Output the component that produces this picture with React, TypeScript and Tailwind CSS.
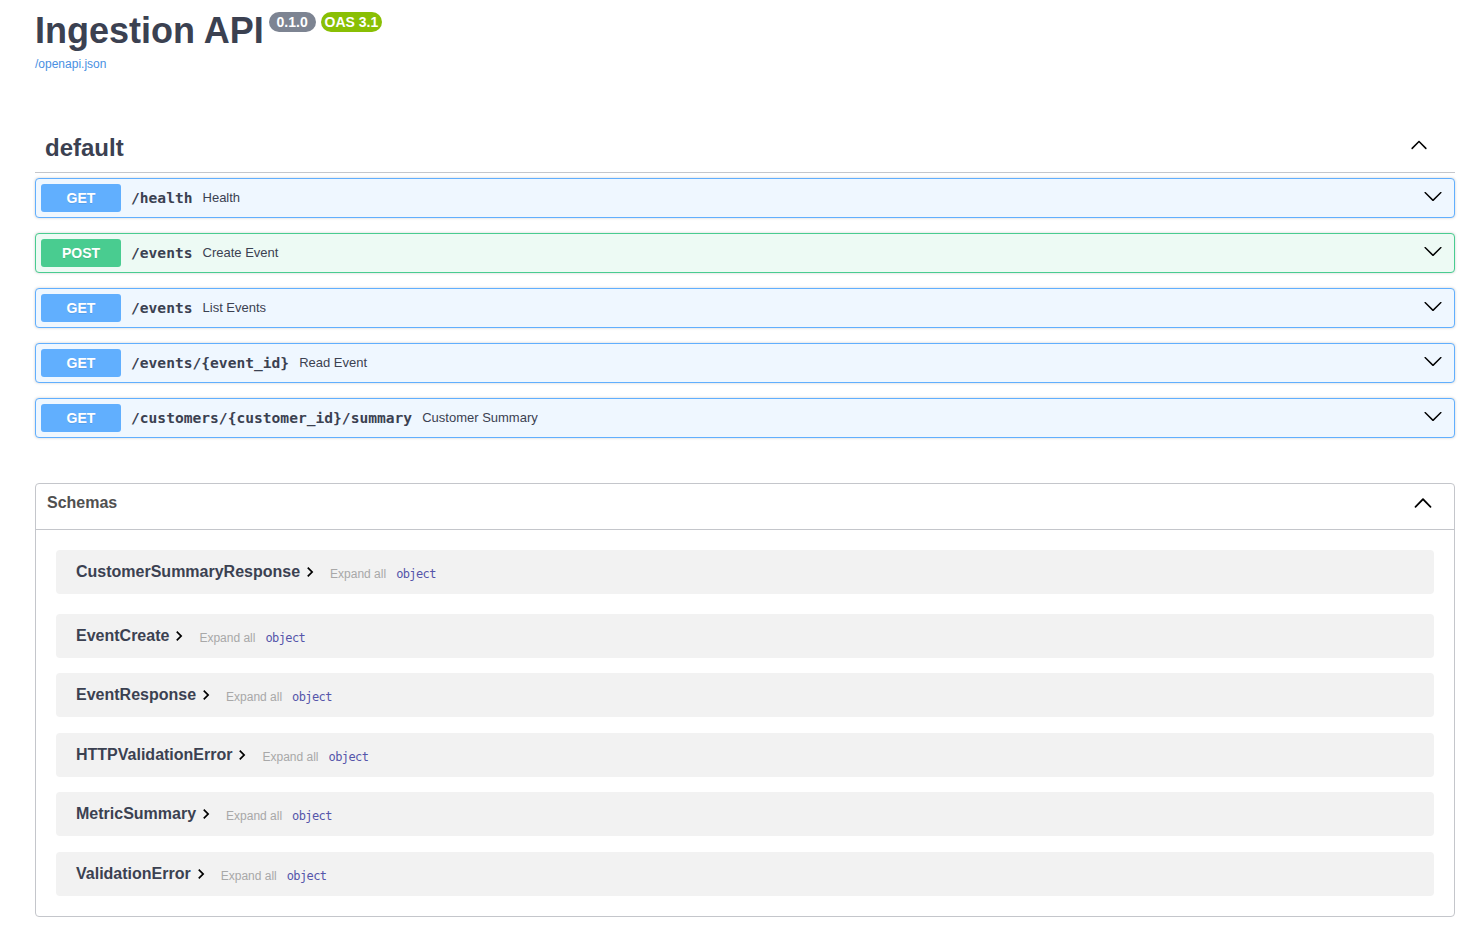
import React from "react";

const sans = { fontFamily: '"Liberation Sans", Arial, sans-serif' };

const ArrowUp = ({ className }: { className?: string }) => (
  <svg viewBox="0 0 20 20" className={className} fill="#000">
    <path d="M17.418 14.908c-.311.311-.815.311-1.127 0L10 8.617l-6.291 6.291c-.311.311-.815.311-1.127 0-.311-.311-.311-.815 0-1.127l6.854-6.854c.311-.311.815-.311 1.127 0l6.854 6.854c.312.311.312.815.001 1.127z" />
  </svg>
);

const ArrowDown = ({ className }: { className?: string }) => (
  <svg viewBox="0 0 20 20" className={className} fill="#000">
    <path d="M17.418 6.109c.272-.268.709-.268.979 0s.271.701 0 .969l-7.908 7.83c-.27.268-.707.268-.979 0l-7.908-7.83c-.27-.268-.27-.701 0-.969.271-.268.709-.268.979 0L10 13.25l7.418-7.141z" />
  </svg>
);

const ChevronRight = () => (
  <svg viewBox="0 0 24 24" className="w-[20px] h-[20px] shrink-0" fill="#000">
    <path d="M10 6L8.59 7.41 13.17 12l-4.58 4.59L10 18l6-6z" />
  </svg>
);

type Op = { method: "GET" | "POST"; path: string; desc: string };

const ops: Op[] = [
  { method: "GET", path: "/health", desc: "Health" },
  { method: "POST", path: "/events", desc: "Create Event" },
  { method: "GET", path: "/events", desc: "List Events" },
  { method: "GET", path: "/events/{event_id}", desc: "Read Event" },
  { method: "GET", path: "/customers/{customer_id}/summary", desc: "Customer Summary" },
];

const models = [
  { name: "CustomerSummaryResponse", mb: "mb-[20px]" },
  { name: "EventCreate", mb: "mb-[15px]" },
  { name: "EventResponse", mb: "mb-[16px]" },
  { name: "HTTPValidationError", mb: "mb-[15px]" },
  { name: "MetricSummary", mb: "mb-[16px]" },
  { name: "ValidationError", mb: "mb-0" },
];

function OpBlock({ op }: { op: Op }) {
  const isGet = op.method === "GET";
  return (
    <div
      className={`flex items-center h-[40px] rounded-[4px] border p-[5px] shadow-[0_0_3px_rgba(0,0,0,0.19)] ${
        isGet ? "border-[#61affe] bg-[#eff7ff]" : "border-[#49cc90] bg-[#edfaf4]"
      }`}
    >
      <div
        className={`w-[80px] h-[28px] shrink-0 flex items-center justify-center rounded-[3px] text-white font-bold text-[14px] leading-[16px] [text-shadow:0_1px_0_rgba(0,0,0,0.1)] ${
          isGet ? "bg-[#61affe]" : "bg-[#49cc90]"
        }`}
        style={sans}
      >
        {op.method}
      </div>
      <span
        className="px-[10px] font-bold text-[14.6px] text-[#3b4151] whitespace-nowrap"
        style={{ fontFamily: '"DejaVu Sans Mono", "Liberation Mono", monospace' }}
      >
        {op.path}
      </span>
      <span className="flex-1 text-[13px] text-[#3b4151]" style={sans}>
        {op.desc}
      </span>
      <ArrowDown className="w-[20px] h-[20px] mr-[6px] mb-[4px] shrink-0" />
    </div>
  );
}

export default function App() {
  return (
    <div className="min-h-[938px] bg-white pl-[35px] pr-[25px] pt-[10px]" style={sans}>
      {/* Info */}
      <div className="flex items-start">
        <h2 className="text-[36px] leading-[41px] font-bold text-[#3b4151]" style={sans}>
          Ingestion API
        </h2>
        <span className="ml-[5px] mt-[2px] h-[20px] flex items-center rounded-full bg-[#7d8492] px-[4px] text-white text-[14px] font-bold leading-[16px] whitespace-pre">
          {" 0.1.0 "}
        </span>
        <span className="ml-[5px] mt-[2px] h-[20px] flex items-center rounded-full bg-[#89bf04] px-[4px] text-white text-[14px] font-bold leading-[16px] whitespace-pre">
          OAS 3.1
        </span>
      </div>
      <div className="mt-[6px] text-[12px] leading-[14px] text-[#4990e2]">/openapi.json</div>

      {/* default tag */}
      <div className="mt-[53px] flex items-start border-b border-[#c4c6cb] pt-[10px] pb-[10px] pl-[10px]">
        <h3 className="flex-1 text-[24px] leading-[28px] font-bold text-[#3b4151]">default</h3>
        <ArrowUp className="w-[20px] h-[20px] mr-[26px] shrink-0" />
      </div>

      <div className="mt-[5px] flex flex-col gap-[15px]">
        {ops.map((op, i) => (
          <OpBlock key={i} op={op} />
        ))}
      </div>

      {/* Schemas */}
      <div className="mt-[45px] rounded-[4px] border border-[#c4c6cb]">
        <div className="h-[46px] flex items-start border-b border-[#c4c6cb] pl-[11px]">
          <h4 className="flex-1 pt-[10px] text-[16px] leading-[18px] font-bold text-[#505050]">Schemas</h4>
          <ArrowUp className="w-[22px] h-[22px] mt-[7px] mr-[20px] shrink-0" />
        </div>
        <div className="px-[20px] pt-[20px] pb-[20px]">
          {models.map((m) => (
            <div
              key={m.name}
              className={`h-[44px] flex items-center rounded-[4px] bg-[#f2f2f2] pl-[20px] ${m.mb}`}
            >
              <span className="text-[16px] leading-[18px] font-bold text-[#3b4151]">{m.name}</span>
              <ChevronRight />
              <span className="ml-[10px] mt-[3px] text-[12px] leading-[14px] text-[#a8a8a8]">Expand all</span>
              <span
                className="ml-[10px] mt-[3px] text-[12px] tracking-[-0.6px] leading-[14px] text-[#55a]"
                style={{ fontFamily: '"DejaVu Sans Mono", "Liberation Mono", monospace' }}
              >
                object
              </span>
            </div>
          ))}
        </div>
      </div>
    </div>
  );
}
